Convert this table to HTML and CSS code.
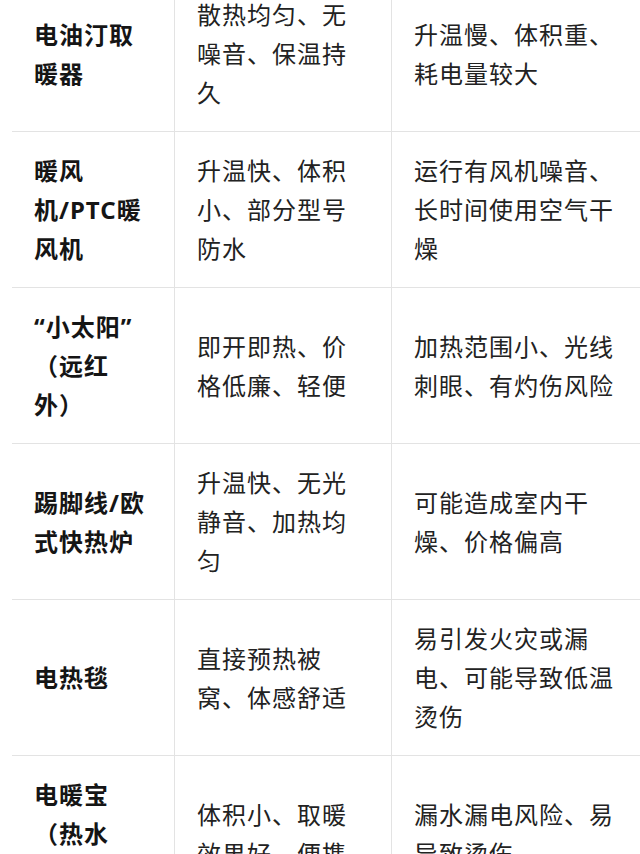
FILE: index.html
```html
<!DOCTYPE html>
<html lang="zh-CN">
<head>
<meta charset="utf-8">
<link rel="stylesheet" href="styles.css">
</head>
<body>
<div class="wrap">
  <div class="grid">
    <div class="cell name">电油汀取<br>暖器</div>
    <div class="cell">散热均匀、无<br>噪音、保温持<br>久</div>
    <div class="cell">升温慢、体积重、<br>耗电量较大</div>

    <div class="cell name">暖风<br>机/PTC暖<br>风机</div>
    <div class="cell">升温快、体积<br>小、部分型号<br>防水</div>
    <div class="cell">运行有风机噪音、<br>长时间使用空气干<br>燥</div>

    <div class="cell name">“小太阳”<br>（远红<br>外）</div>
    <div class="cell">即开即热、价<br>格低廉、轻便</div>
    <div class="cell">加热范围小、光线<br>刺眼、有灼伤风险</div>

    <div class="cell name">踢脚线/欧<br>式快热炉</div>
    <div class="cell">升温快、无光<br>静音、加热均<br>匀</div>
    <div class="cell">可能造成室内干<br>燥、价格偏高</div>

    <div class="cell name">电热毯</div>
    <div class="cell">直接预热被<br>窝、体感舒适</div>
    <div class="cell">易引发火灾或漏<br>电、可能导致低温<br>烫伤</div>

    <div class="cell name">电暖宝<br>（热水<br>袋）</div>
    <div class="cell">体积小、取暖<br>效果好、便携</div>
    <div class="cell">漏水漏电风险、易<br>导致烫伤</div>
  </div>
</div>
</body>
</html>
```

FILE: styles.css
```css
html, body {
  margin: 0;
  padding: 0;
  background: #ffffff;
  overflow: hidden;
}

.wrap {
  padding-left: 12px;
  margin-top: -24px;
}

.grid {
  display: grid;
  grid-template-columns: 162px 217px 1fr;
}

.cell {
  display: flex;
  align-items: center;
  padding: 19px 12px 19px 22px;
  border-bottom: 1px solid #e3e3e3;
  font-family: "Noto Sans", "Noto Sans CJK SC", sans-serif;
  font-size: 24px;
  letter-spacing: 1px;
  line-height: 39px;
  color: #222222;
  white-space: nowrap;
}

.cell:not(.name) {
  border-left: 1px solid #e3e3e3;
}

.name {
  font-weight: 700;
  color: #151515;
}
```
